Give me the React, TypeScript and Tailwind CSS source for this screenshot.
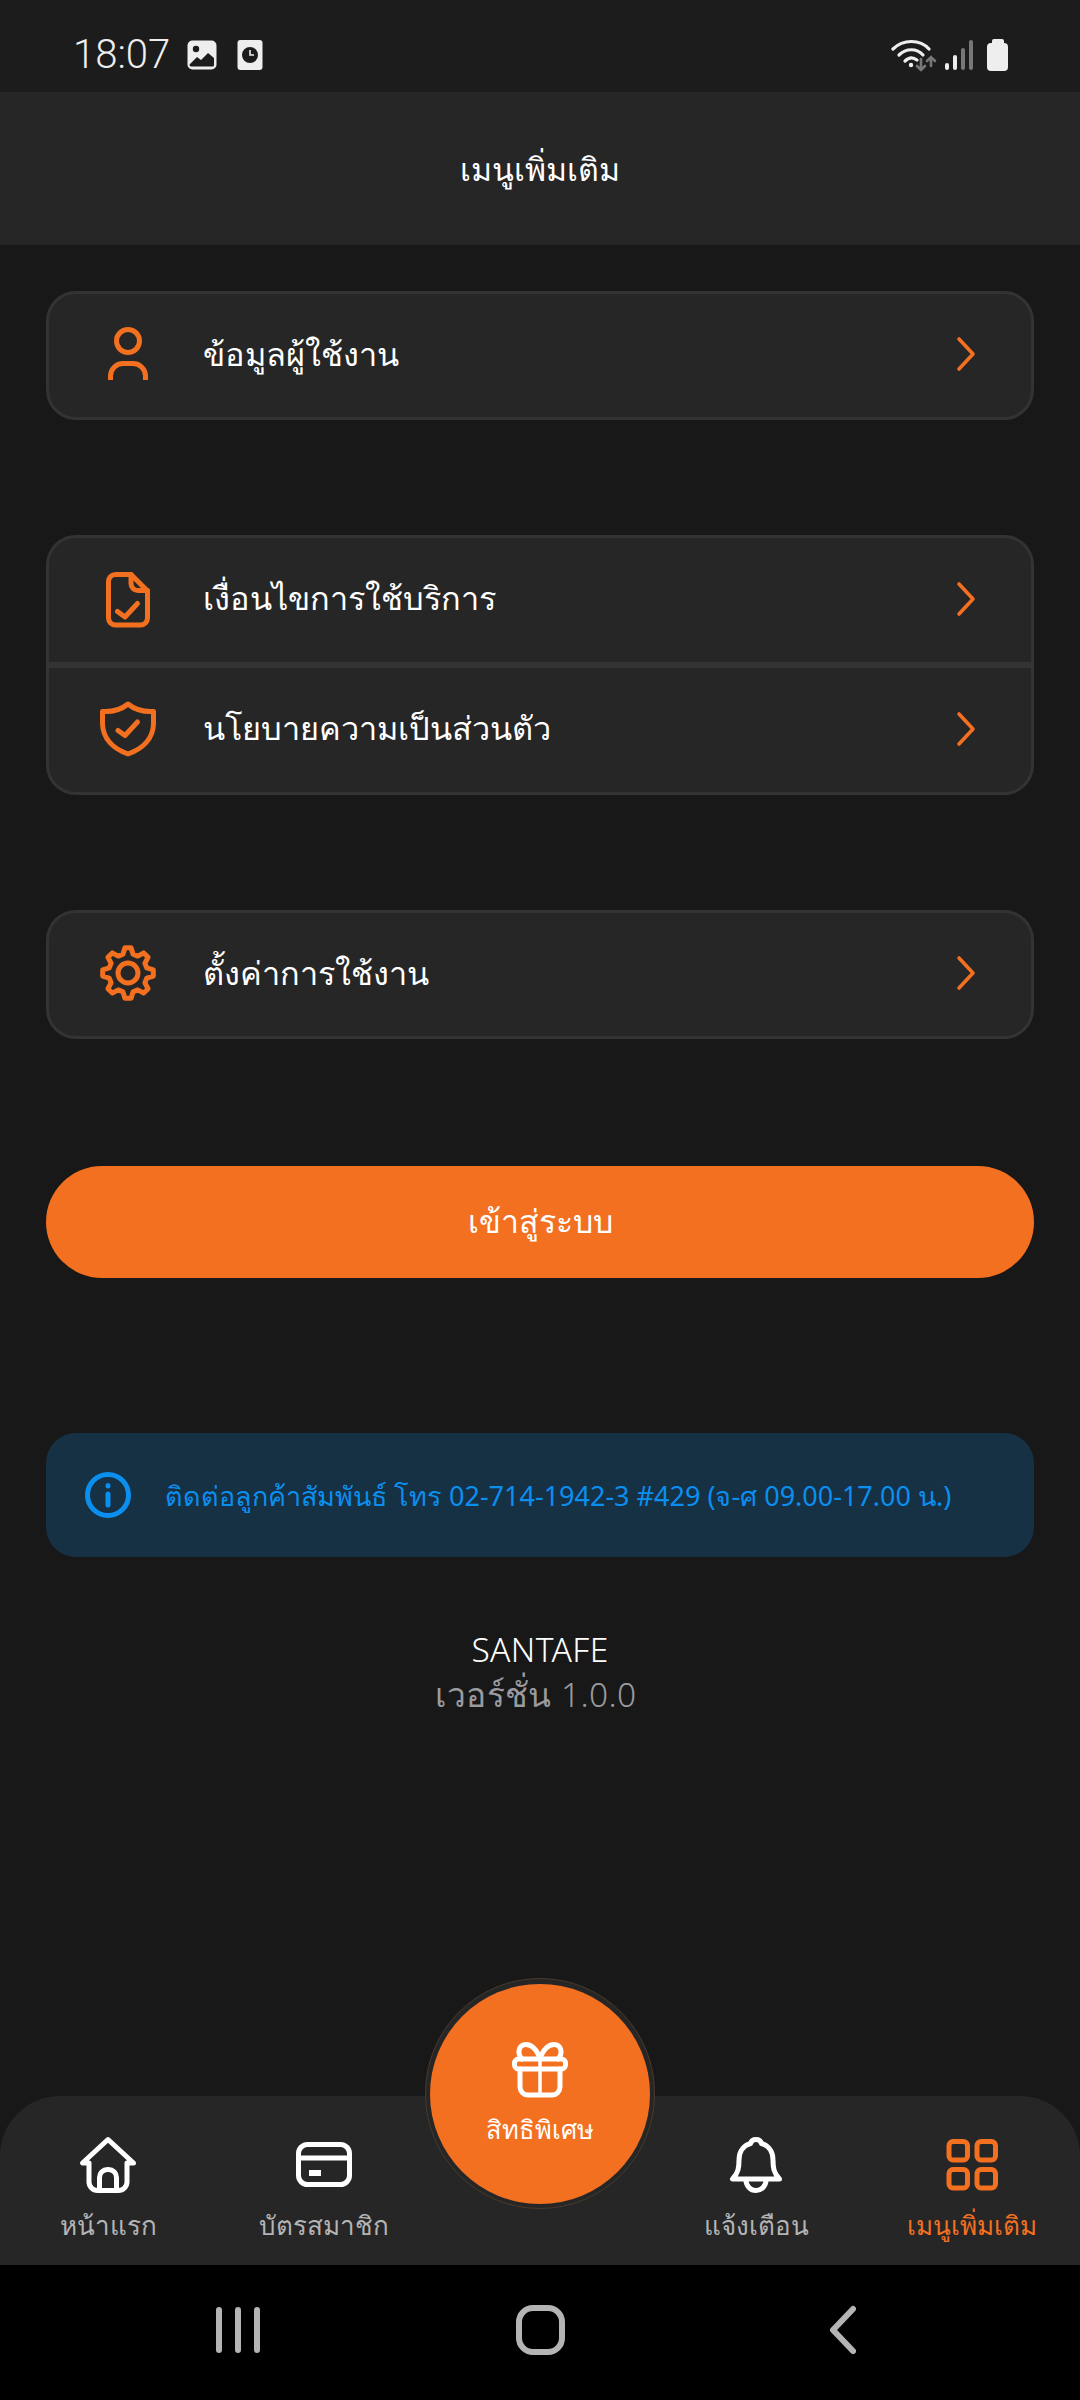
import type { ReactNode } from "react"

const ORANGE = "#f37021"

function Ico({ children, color = ORANGE, sw = 5 }: { children: ReactNode; color?: string; sw?: number }) {
  return (
    <svg
      width="60"
      height="60"
      viewBox="0 0 60 60"
      fill="none"
      stroke={color}
      strokeWidth={sw}
      strokeLinecap="round"
      strokeLinejoin="round"
      className="shrink-0"
    >
      {children}
    </svg>
  )
}

function gearPoints() {
  const pts: string[] = []
  for (let i = 0; i < 8; i++) {
    const a = (i * 45 * Math.PI) / 180
    for (const [r, d] of [
      [19.5, -15],
      [25.5, -7],
      [25.5, 7],
      [19.5, 15],
    ]) {
      const t = a + (d * Math.PI) / 180
      pts.push(`${(30 + r * Math.sin(t)).toFixed(2)},${(30 - r * Math.cos(t)).toFixed(2)}`)
    }
  }
  return pts.join(" ")
}

const UserIcon = () => (
  <Ico>
    <circle cx="30" cy="17" r="11.5" />
    <path strokeLinecap="butt" d="M12.5 56v-4a12.5 12.5 0 0 1 12.5-12.5h10a12.5 12.5 0 0 1 12.5 12.5v4" />
  </Ico>
)

const FileIcon = () => (
  <Ico>
    <path d="M17.5 5.5H33L49.5 22v27a7 7 0 0 1-7 7h-25a7 7 0 0 1-7-7V12.5a7 7 0 0 1 7-7z" />
    <path d="M33 5.5v9a7 7 0 0 0 7 7h9.5" />
    <path d="M19.5 42.5l7.5 5.5 12.5-13.5" />
  </Ico>
)

const ShieldIcon = () => (
  <Ico>
    <path d="M30 5C24 10 14 13 4.5 12.5V24C4.5 40 16 50 30 55C44 50 55.5 40 55.5 24V12.5C46 13 36 10 30 5z" />
    <path d="M20 31.5l7 5 12.5-13.5" />
  </Ico>
)

const GearIcon = () => (
  <Ico>
    <polygon points={gearPoints()} />
    <circle cx="30" cy="30" r="10" />
  </Ico>
)

const Chevron = () => (
  <svg width="20" height="36" viewBox="0 0 20 36" fill="none" stroke={ORANGE} strokeWidth="3.6" strokeLinecap="round" strokeLinejoin="round">
    <path d="M3 3l14 15L3 33" />
  </svg>
)

function Row({ icon, label }: { icon: ReactNode; label: string }) {
  return (
    <div className="flex flex-1 items-center pb-[3px] pl-[49px] pr-[55px]">
      <div className="w-[60px] shrink-0">{icon}</div>
      <span className="ml-[45px] flex-1 text-[32.5px] font-light leading-none text-white">{label}</span>
      <Chevron />
    </div>
  )
}

function NavItem({ icon, label, active }: { icon: ReactNode; label: string; active?: boolean }) {
  return (
    <div className="flex flex-col items-center pt-[39px]">
      {icon}
      <span className={`mt-[12px] text-[26px] font-light leading-[36px] ${active ? "text-[#f37021]" : "text-[#b4b4b4]"}`}>{label}</span>
    </div>
  )
}

export default function App() {
  return (
    <div className="relative flex h-[2400px] w-[1080px] flex-col overflow-hidden bg-[#181818] font-['Noto_Sans',sans-serif]">
      {/* status bar */}
      <div className="flex h-[92px] items-center justify-between bg-[#1c1c1c] pl-[73px] pr-[72px] pt-[17px]">
        <div className="flex items-center">
          <span className="font-['Roboto',sans-serif] text-[40px] font-light leading-none text-[#eeeeee]">18:07</span>
          <svg width="30" height="30" viewBox="0 0 30 30" className="ml-[17px]">
            <rect x="0.5" y="0.5" width="29" height="29" rx="5" fill="#eeeeee" />
            <circle cx="9" cy="9" r="3.2" fill="#1c1c1c" />
            <path d="M3 24l7-7 4 3 7-7 6 5v7a1.5 1.5 0 0 1-1.5 1.5h-21A1.5 1.5 0 0 1 3 24z" fill="#1c1c1c" />
          </svg>
          <svg width="26" height="30" viewBox="0 0 26 30" className="ml-[20px]">
            <rect x="0.5" y="0" width="25" height="30" rx="3" fill="#eeeeee" />
            <circle cx="13" cy="15" r="8" fill="#1c1c1c" />
            <path d="M13 10v5h4" stroke="#eeeeee" strokeWidth="1.6" fill="none" />
          </svg>
        </div>
        <div className="flex items-center">
          <svg width="46" height="34" viewBox="0 0 46 34" fill="none" strokeLinecap="round">
            <path d="M2 11C12 1 29 1 38 11" stroke="#eeeeee" strokeWidth="3.2" />
            <path d="M8 17C15 10 26 10 32 17" stroke="#eeeeee" strokeWidth="3.2" />
            <path d="M14 23C18 19 22 19 26 22" stroke="#eeeeee" strokeWidth="3.2" />
            <circle cx="20" cy="27" r="2.2" fill="#eeeeee" />
            <path d="M30 21v11M26 28l4 4 4-4" stroke="#777777" strokeWidth="2.6" />
            <path d="M40 28V19M36 23l4-4 4 4" stroke="#777777" strokeWidth="2.6" />
          </svg>
          <div className="ml-[8px] flex h-[30px] items-end gap-[4px]">
            <div className="h-[7px] w-[4px] rounded-full bg-[#eeeeee]" />
            <div className="h-[15px] w-[4px] rounded-full bg-[#eeeeee]" />
            <div className="h-[22px] w-[4px] rounded-full bg-[#777777]" />
            <div className="h-[30px] w-[4px] rounded-full bg-[#777777]" />
          </div>
          <div className="ml-[14px] flex flex-col items-center">
            <div className="h-[4px] w-[12px] rounded-t-[2px] bg-[#eeeeee]" />
            <div className="h-[28px] w-[21px] rounded-[4px] bg-[#eeeeee]" />
          </div>
        </div>
      </div>

      {/* header */}
      <div className="flex h-[153px] items-center justify-center bg-[#262626]">
        <span className="text-[32px] font-light leading-none text-white">เมนูเพิ่มเติม</span>
      </div>

      {/* content */}
      <div className="flex flex-1 flex-col px-[46px] pt-[46px]">
        <div className="flex h-[129px] flex-col rounded-[30px] border-[3px] border-[#333333] bg-[#262626]">
          <Row icon={<UserIcon />} label="ข้อมูลผู้ใช้งาน" />
        </div>

        <div className="mt-[115px] flex h-[260px] flex-col rounded-[30px] border-[3px] border-[#333333] bg-[#262626]">
          <Row icon={<FileIcon />} label="เงื่อนไขการใช้บริการ" />
          <div className="h-[6px] bg-[#333333]" />
          <Row icon={<ShieldIcon />} label="นโยบายความเป็นส่วนตัว" />
        </div>

        <div className="mt-[115px] flex h-[129px] flex-col rounded-[30px] border-[3px] border-[#333333] bg-[#262626]">
          <Row icon={<GearIcon />} label="ตั้งค่าการใช้งาน" />
        </div>

        <div className="mt-[127px] flex h-[112px] items-center justify-center rounded-full bg-[#f37021] pb-[2px] text-[32px] font-light leading-none text-white">
          เข้าสู่ระบบ
        </div>

        <div className="mt-[155px] flex h-[124px] items-center rounded-[30px] bg-[#163044] pl-[39px]">
          <svg width="46" height="46" viewBox="0 0 46 46" fill="none" stroke="#0a8fef" strokeWidth="5" strokeLinecap="round" className="shrink-0">
            <circle cx="23" cy="23" r="20.5" />
            <path d="M23 22v11" />
            <path d="M23 13.5v.5" />
          </svg>
          <span className="ml-[34px] text-[27px] leading-none text-[#0a8fef]">ติดต่อลูกค้าสัมพันธ์ โทร 02-714-1942-3 #429 (จ-ศ 09.00-17.00 น.)</span>
        </div>

        <div className="mt-[70px] flex flex-col items-center">
          <span className="text-[33.5px] font-light leading-[44px] tracking-[0.4px] text-white">SANTAFE</span>
          <span className="mr-[8px] text-[33.5px] font-light leading-[46px] tracking-[0.4px] text-[#9a9a9f]">เวอร์ชั่น 1.0.0</span>
        </div>
      </div>

      {/* bottom nav */}
      <div className="grid h-[169px] grid-cols-5 rounded-t-[60px] bg-[#262626]">
        <NavItem
          label="หน้าแรก"
          icon={
            <Ico color="#ffffff">
              <path d="M30 4.5L4.5 28H11V47a8.5 8.5 0 0 0 8.5 8.5h21A8.5 8.5 0 0 0 49 47V28h6.5z" />
              <path d="M21.5 55V42.5a8 8 0 0 1 8-8h1a8 8 0 0 1 8 8V55" />
            </Ico>
          }
        />
        <NavItem
          label="บัตรสมาชิก"
          icon={
            <Ico color="#ffffff">
              <rect x="4.5" y="9.5" width="51" height="40" rx="9" />
              <path d="M4.5 23h51" />
              <rect x="15" y="35" width="12" height="6" fill="#ffffff" stroke="none" />
            </Ico>
          }
        />
        <div />
        <NavItem
          label="แจ้งเตือน"
          icon={
            <Ico color="#ffffff">
              <path d="M6.5 44H53.5C47.5 38 47 32 47 25C47 15 41 10 35.5 8.5C34 3 26 3 24.5 8.5C19 10 13 15 13 25C13 32 12.5 38 6.5 44z" />
              <path d="M20 45a10 10.5 0 0 0 20 0" />
            </Ico>
          }
        />
        <NavItem
          label="เมนูเพิ่มเติม"
          active
          icon={
            <Ico>
              <rect x="7" y="6.5" width="18.5" height="18.5" rx="4" />
              <rect x="35" y="6.5" width="18.5" height="18.5" rx="4" />
              <rect x="7" y="34.5" width="18.5" height="18.5" rx="4" />
              <rect x="35" y="34.5" width="18.5" height="18.5" rx="4" />
            </Ico>
          }
        />
      </div>

      {/* system nav */}
      <div className="grid h-[135px] w-full grid-cols-3 items-center bg-black px-[87px] pb-[5px]">
        <div className="flex justify-center gap-[13px]">
          <div className="h-[46px] w-[6px] rounded-full bg-[#b4b4b4]" />
          <div className="h-[46px] w-[6px] rounded-full bg-[#b4b4b4]" />
          <div className="h-[46px] w-[6px] rounded-full bg-[#b4b4b4]" />
        </div>
        <div className="flex justify-center">
          <div className="h-[50px] w-[49px] rounded-[17px] border-[6px] border-[#b4b4b4]" />
        </div>
        <div className="flex justify-center">
          <svg width="28" height="50" viewBox="0 0 28 50" fill="none" stroke="#b4b4b4" strokeWidth="6" strokeLinecap="round" strokeLinejoin="round">
            <path d="M25 4L5 25l20 21" />
          </svg>
        </div>
      </div>

      {/* privilege button */}
      <div className="absolute left-[425px] top-[1978px] flex h-[231px] w-[230px] items-center justify-center rounded-full border border-[#4a3a2c] bg-[#262626]">
        <div className="flex h-[220px] w-[220px] flex-col items-center rounded-full bg-[#f37021] pt-[56px]">
          <Ico color="#ffffff">
            <rect x="4.5" y="19" width="51" height="10" rx="4" />
            <path d="M10 29V47a8 8 0 0 0 8 8H42a8 8 0 0 0 8-8V29" />
            <path d="M30 19V55" strokeWidth="3.5" />
            <path d="M30 19C27 9 21 4.5 16 4.5C9 4.5 6.5 13 12 19" />
            <path d="M30 19C33 9 39 4.5 44 4.5C51 4.5 53.5 13 48 19" />
          </Ico>
          <span className="mt-[11px] text-[25.5px] font-light leading-[36px] text-white">สิทธิพิเศษ</span>
        </div>
      </div>
    </div>
  )
}
